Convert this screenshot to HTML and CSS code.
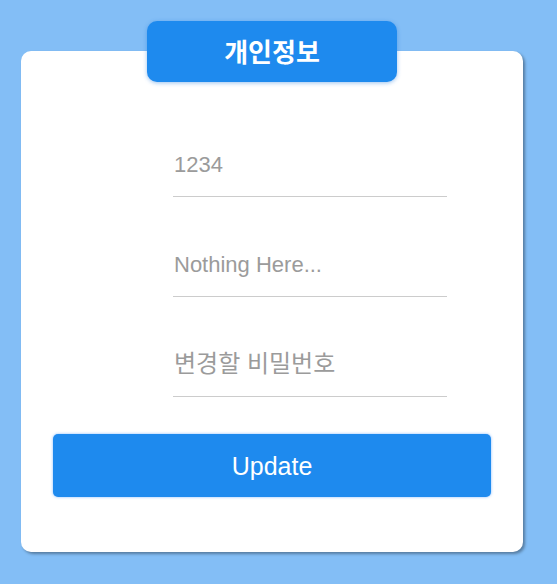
FILE: index.html
```html
<!DOCTYPE html>
<html lang="ko">
<head>
<meta charset="utf-8">
<link rel="stylesheet" href="styles.css">
</head>
<body>
<div class="page">
  <div class="card">
    <div class="tab">개인정보</div>
    <form class="form">
      <div class="field"><input type="text" placeholder="1234"></div>
      <div class="field"><input type="text" placeholder="Nothing Here..."></div>
      <div class="field"><input class="ko" type="password" placeholder="변경할 비밀번호"></div>
      <button type="button" class="btn">Update</button>
    </form>
  </div>
</div>
</body>
</html>
```

FILE: styles.css
```css
html, body {
  margin: 0;
  padding: 0;
}
body {
  background: #83bef6;
  width: 557px;
  height: 584px;
  font-family: "Liberation Sans", "Noto Sans CJK KR", sans-serif;
}
.page {
  padding: 51px 0 0 21px;
}
.card {
  position: relative;
  width: 502px;
  height: 501px;
  background: #fff;
  border-radius: 10px;
  box-shadow: 2px 2px 3px rgba(0, 0, 0, 0.35);
  box-sizing: border-box;
  padding: 83px 32px 0 32px;
}
.tab {
  position: absolute;
  left: 126px;
  top: -30px;
  width: 250px;
  height: 61px;
  background: #1e8aee;
  border-radius: 10px;
  box-shadow: 0 1px 4px rgba(30, 120, 220, 0.45);
  color: #fff;
  font-family: "Noto Sans CJK KR", sans-serif;
  font-weight: 700;
  font-size: 26px;
  line-height: 1;
  display: flex;
  align-items: center;
  justify-content: center;
  padding-bottom: 2px;
  box-sizing: border-box;
}
.form {
  display: flex;
  flex-direction: column;
}
.field {
  margin-left: 120px;
  width: 274px;
  height: 100px;
  display: flex;
  flex-direction: column;
  justify-content: flex-end;
}
.field input {
  border: none;
  border-bottom: 1px solid #cccccc;
  outline: none;
  padding: 0 0 0 1px;
  height: 64px;
  font-size: 22px;
  font-family: "Liberation Sans", "Noto Sans CJK KR", sans-serif;
  color: #555;
  background: transparent;
  box-sizing: border-box;
  align-self: stretch;
}
.field input.ko {
  font-size: 24px;
  padding-bottom: 2px;
}
.field input::placeholder {
  color: #9b9b9b;
}
.field:first-child {
  height: 63px;
}
.btn {
  margin-top: 37px;
  height: 63px;
  border: none;
  border-radius: 5px;
  background: #1e8aee;
  color: #fff;
  font-size: 25px;
  font-family: "Liberation Sans", sans-serif;
  box-shadow: 0 0 3px rgba(120, 180, 255, 0.9);
  padding: 2px 0 0 0;
  cursor: pointer;
}
```
